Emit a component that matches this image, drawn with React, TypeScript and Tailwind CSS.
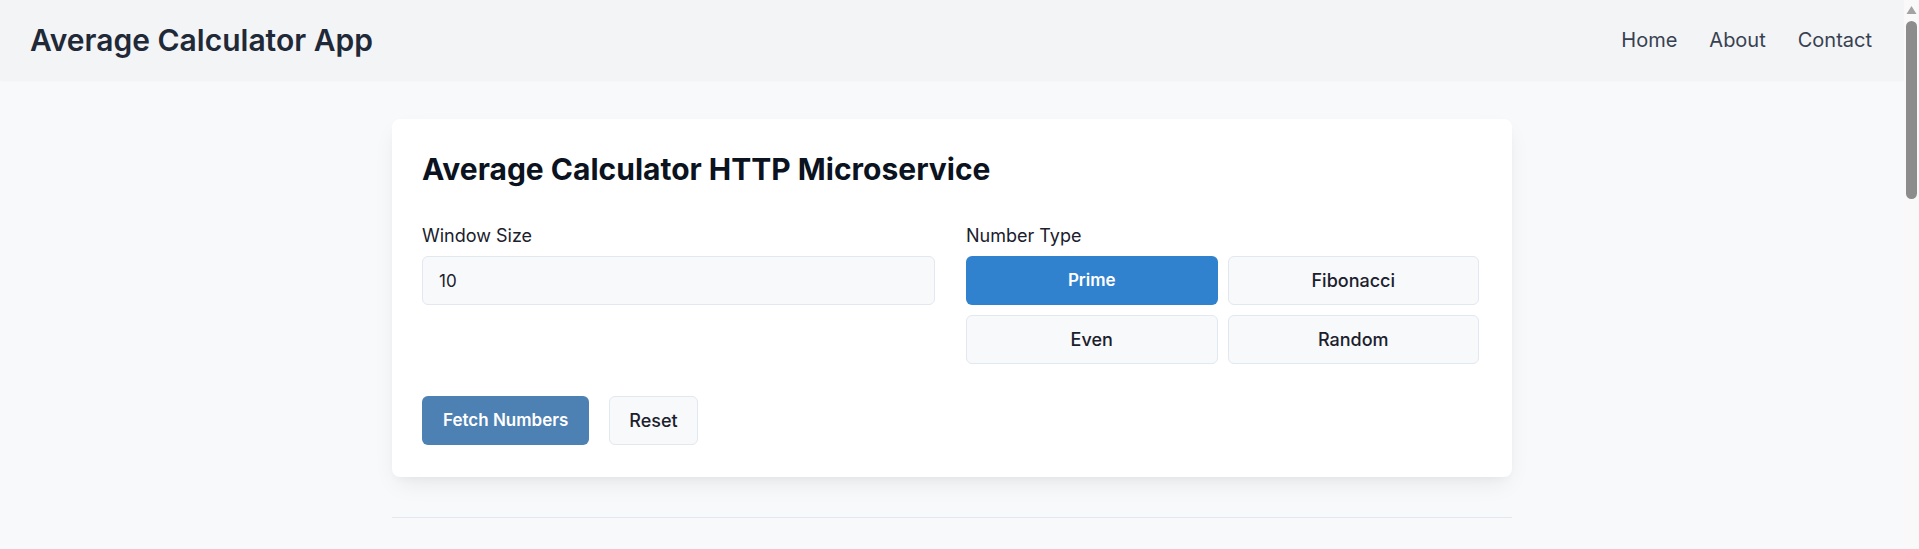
import { useState } from 'react'

const TYPES = ['Prime', 'Fibonacci', 'Even', 'Random']

function Scrollbar() {
  return (
    <div className="w-[15px] h-screen shrink-0 bg-[#f9f9f9] flex flex-col items-center">
      <svg width="15" height="17" viewBox="0 0 15 17" className="shrink-0">
        <path d="M2.5 14 L7.5 6 L12.5 14 Z" fill="#a3a3a3" />
      </svg>
      <div className="w-[11px] h-[178px] mt-[4px] rounded-full bg-[#8c8c8c]" />
    </div>
  )
}

export default function App() {
  const [windowSize, setWindowSize] = useState('10')
  const [type, setType] = useState('Prime')

  return (
    <div
      className="flex items-start bg-[#f8f9fb] text-[#1a202c]"
      style={{ fontFamily: 'Inter, "Noto Sans", sans-serif' }}
    >
      <div className="flex-1 min-w-0 min-h-[1653px]">
        <header className="h-20 bg-[#f3f4f6] pl-[30px] pr-8 flex items-center justify-between shadow-[0_1px_2px_rgba(0,0,0,0.03)]">
          <h1 className="text-[30px] font-semibold text-[#1f2937]">Average Calculator App</h1>
          <nav className="flex items-center gap-8 text-xl text-[#374151]">
            <a href="#">Home</a>
            <a href="#">About</a>
            <a href="#">Contact</a>
          </nav>
        </header>

        <main className="w-[1120px] mx-auto pt-[39px]">
          <div className="bg-white rounded-lg pl-[30px] pr-[33px] py-8 shadow-[0_10px_25px_-5px_rgba(0,0,0,0.08),0_4px_10px_-4px_rgba(0,0,0,0.05)]">
            <h2 className="text-3xl font-bold text-[#0b1220] mb-[37px]">Average Calculator HTTP Microservice</h2>

            <div className="grid grid-cols-2 gap-[31px]">
              <div>
                <label className="block text-lg leading-6 mb-2">Window Size</label>
                <input
                  value={windowSize}
                  onChange={e => setWindowSize(e.target.value)}
                  className="w-full h-[49px] px-4 rounded-md border border-[#e2e8f0] bg-[#f8f9fb] text-[17px] outline-none"
                />
              </div>
              <div>
                <label className="block text-lg leading-6 mb-2">Number Type</label>
                <div className="grid grid-cols-2 gap-2.5">
                  {TYPES.map(t => (
                    <button
                      key={t}
                      onClick={() => setType(t)}
                      className={
                        t === type
                          ? 'h-[49px] rounded-md bg-[#3182ce] text-white font-semibold text-[17px]'
                          : 'h-[49px] rounded-md border border-[#e2e8f0] bg-[#f8f9fb] font-medium text-lg'
                      }
                    >
                      {t}
                    </button>
                  ))}
                </div>
              </div>
            </div>

            <div className="flex items-center gap-5 mt-8">
              <button className="h-[49px] px-[21px] rounded-md bg-[#4d80b3] text-white font-semibold text-[17px]">
                Fetch Numbers
              </button>
              <button
                onClick={() => setWindowSize('10')}
                className="h-[49px] px-[19px] rounded-md border border-[#e2e8f0] bg-[#f8f9fb] font-medium text-lg"
              >
                Reset
              </button>
            </div>
          </div>

          <hr className="mt-10 border-t border-[#e2e8f0]" />
        </main>
      </div>
      <Scrollbar />
    </div>
  )
}
